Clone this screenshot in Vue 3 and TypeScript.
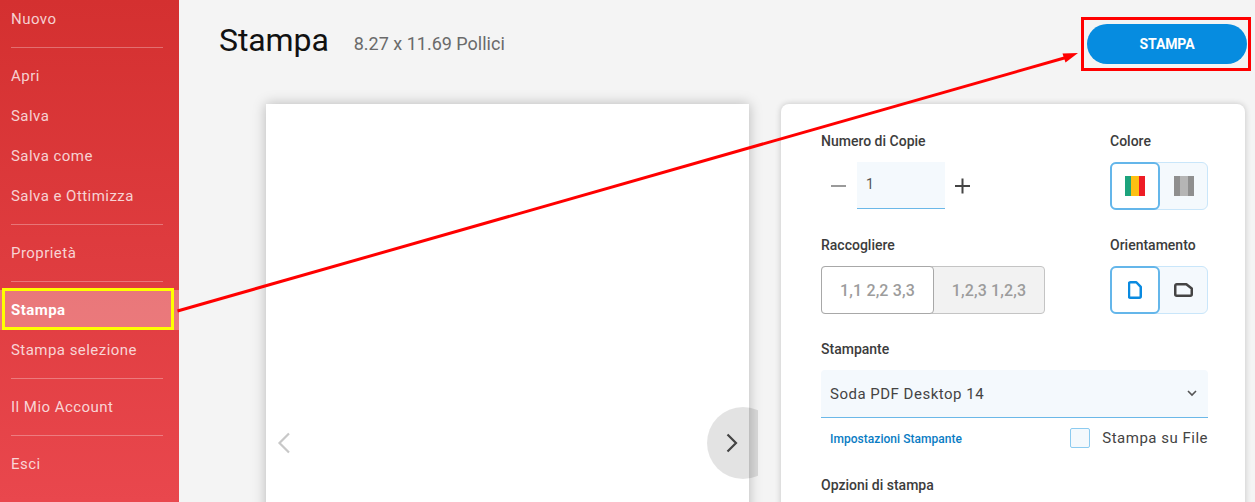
<script setup lang="ts">
const groups: { label: string; active?: boolean }[][] = [
  [{ label: 'Nuovo' }],
  [{ label: 'Apri' }, { label: 'Salva' }, { label: 'Salva come' }, { label: 'Salva e Ottimizza' }],
  [{ label: 'Proprietà' }],
  [{ label: 'Stampa', active: true }, { label: 'Stampa selezione' }],
  [{ label: 'Il Mio Account' }],
  [{ label: 'Esci' }],
]
</script>

<template>
  <div class="app">
    <aside class="sidebar">
      <div v-for="(g, i) in groups" :key="i" class="group">
        <div v-for="it in g" :key="it.label" class="item" :class="{ active: it.active }">{{ it.label }}</div>
      </div>
    </aside>
    <main class="main">
      <header class="header">
        <h1 class="title">Stampa</h1>
        <span class="size">8.27 x 11.69 Pollici</span>
        <button class="print">STAMPA</button>
      </header>
      <section class="content">
        <div class="page"></div>
        <div class="panel">
          <div class="row first">
            <div>
              <div class="label">Numero di Copie</div>
              <div class="stepper">
                <svg class="step" width="16" height="16" viewBox="0 0 16 16"><path d="M0 8h15" stroke="#9a9a9a" stroke-width="2" /></svg>
                <div class="num">1</div>
                <svg class="step" width="16" height="16" viewBox="0 0 16 16"><path d="M0 8h15M7.500 .5v15" stroke="#444" stroke-width="2" /></svg>
              </div>
            </div>
            <div class="side">
              <div class="label">Colore</div>
              <div class="toggle">
                <div class="tbtn on">
                  <svg width="20" height="20" viewBox="0 0 20 20"><rect width="6" height="20" fill="#1ca37c" /><rect x="6" width="8" height="20" fill="#fdc012" /><rect x="14" width="6" height="20" fill="#ee1c25" /></svg>
                </div>
                <div class="tbtn">
                  <svg width="20" height="20" viewBox="0 0 20 20"><rect width="6" height="20" fill="#8f8f8f" /><rect x="6" width="8" height="20" fill="#b5b5b5" /><rect x="14" width="6" height="20" fill="#8f8f8f" /></svg>
                </div>
              </div>
            </div>
          </div>
          <div class="row second">
            <div>
              <div class="label">Raccogliere</div>
              <div class="collate">
                <div class="col on">1,1 2,2 3,3</div>
                <div class="col">1,2,3 1,2,3</div>
              </div>
            </div>
            <div class="side">
              <div class="label">Orientamento</div>
              <div class="toggle">
                <div class="tbtn on">
                  <svg width="14" height="18" viewBox="0 0 14 18"><path d="M2.500 1.250h5.800l4.450 4.700v9.300a1.500 1.500 0 0 1-1.500 1.500h-8.750a1.500 1.500 0 0 1-1.500-1.500v-12.500a1.500 1.500 0 0 1 1.500-1.500z" fill="none" stroke="#0a8ae0" stroke-width="2.500" stroke-linejoin="round" /></svg>
                </div>
                <div class="tbtn">
                  <svg width="19" height="14" viewBox="0 0 19 14"><path d="M2.750 1.250h9.550l5.450 4.300v5.700a1.500 1.500 0 0 1-1.500 1.500h-13.500a1.500 1.500 0 0 1-1.500-1.500v-8.500a1.500 1.500 0 0 1 1.500-1.500z" fill="none" stroke="#444" stroke-width="2.500" stroke-linejoin="round" /></svg>
                </div>
              </div>
            </div>
          </div>
          <div class="label printer-label">Stampante</div>
          <div class="select">
            <span>Soda PDF Desktop 14</span>
            <svg width="10" height="7" viewBox="0 0 10 7"><path d="M1 1l4 4 4-4" fill="none" stroke="#555" stroke-width="1.600" /></svg>
          </div>
          <div class="under">
            <span class="link">Impostazioni Stampante</span>
            <label class="file"><span class="box"></span>Stampa su File</label>
          </div>
          <div class="label options">Opzioni di stampa</div>
        </div>
        <svg class="prev" width="14" height="22" viewBox="0 0 14 22"><path d="M12 1.500L2.500 11l9.500 9.500" fill="none" stroke="#c8c8c8" stroke-width="2.200" /></svg>
        <div class="next-clip">
          <div class="next">
            <svg width="12" height="20" viewBox="0 0 12 20"><path d="M1.500 1.500L10 10l-8.500 8.500" fill="none" stroke="#444" stroke-width="2.200" /></svg>
          </div>
        </div>
      </section>
    </main>
    <div class="hl-yellow"></div>
    <div class="hl-red"></div>
    <svg class="arrow" width="1255" height="502" viewBox="0 0 1255 502">
      <path d="M177.500 311L1066 57.500" stroke="#ff0000" stroke-width="3" fill="none" />
      <path d="M1078 53L1062.500 53.500L1065.500 62.500z" fill="#ff0000" />
    </svg>
  </div>
</template>

<style>
html, body { margin: 0; overflow: hidden; }
</style>

<style scoped>
.app {
  position: relative;
  display: flex;
  width: 1255px;
  height: 502px;
  overflow: hidden;
  font-family: Roboto, "Liberation Sans", sans-serif;
  background: #f4f4f4;
}
.sidebar {
  flex: 0 0 179px;
  box-sizing: border-box;
  height: 502px;
  background: linear-gradient(180deg, #d43030 0%, #e9474d 100%);
}
.group {
  margin: 0 16px 8px 11px;
  padding: 0 0 8px;
  border-bottom: 1px solid rgba(255, 255, 255, 0.3);
}
.group:first-child { margin-top: -1px; }
.group:last-child { border-bottom: 0; }
.item {
  height: 40px;
  line-height: 40px;
  font-size: 15px;
  letter-spacing: 0.46px;
  color: rgba(255, 255, 255, 0.78);
  white-space: nowrap;
}
.item.active {
  margin: 0 -16px 0 -11px;
  padding-left: 11px;
  font-weight: 700;
  color: #fff;
  background: rgba(255, 255, 255, 0.3);
}
.main {
  flex: 1;
  min-width: 0;
  display: flex;
  flex-direction: column;
}
.header {
  display: flex;
  align-items: flex-start;
  height: 104px;
  box-sizing: border-box;
  padding: 20px 8px 0 40px;
}
.title {
  margin: 0;
  font-size: 32px;
  line-height: 40px;
  font-weight: 400;
  letter-spacing: -0.1px;
  color: #111;
}
.size {
  margin: 14px 0 0 25px;
  font-size: 18px;
  line-height: 20px;
  color: #6a6a6a;
}
.print {
  margin-left: auto;
  margin-top: 4px;
  width: 160px;
  height: 40px;
  border: 0;
  border-radius: 20px;
  background: #068ce0;
  color: #fff;
  font-family: inherit;
  font-size: 14px;
  font-weight: 700;
  letter-spacing: -0.1px;
}
.content {
  position: relative;
  flex: 1;
  display: flex;
  padding-left: 87px;
  min-height: 0;
}
.page {
  width: 483px;
  height: 500px;
  background: #fff;
  box-shadow: 0 0 12px rgba(0, 0, 0, 0.25);
}
.panel {
  margin-left: 32px;
  width: 464px;
  height: 500px;
  box-sizing: border-box;
  padding: 28px 37px 0 40px;
  background: #fff;
  border-radius: 8px 8px 0 0;
  box-shadow: 0 0 6px rgba(0, 0, 0, 0.2);
}
.row {
  display: flex;
  justify-content: space-between;
}
.second { margin-top: 26px; }
.side { width: 98px; }
.label {
  font-size: 14px;
  line-height: 18px;
  font-weight: 500;
  color: #3c3c3c;
  letter-spacing: 0;
}
.stepper {
  display: flex;
  align-items: center;
  margin-top: 12px;
  height: 48px;
}
.step { margin: 0 10px; flex: none; }
.num {
  box-sizing: border-box;
  width: 88px;
  height: 47px;
  margin: 0 0 1px 0;
  padding: 14px 0 0 9px;
  background: #f4f9fd;
  border-bottom: 1px solid #6bb8e8;
  font-size: 14px;
  color: #555;
}
.toggle {
  display: flex;
  margin-top: 12px;
  height: 48px;
  box-sizing: border-box;
  border: 1px solid #c9e6fa;
  border-radius: 6px;
  background: #f4f9fd;
}
.tbtn {
  flex: 1;
  display: flex;
  align-items: center;
  justify-content: center;
}
.tbtn.on {
  flex: 0 0 50px;
  box-sizing: border-box;
  margin: -1px 0 -1px -1px;
  border: 2px solid #64b6ea;
  border-radius: 6px;
  background: #fff;
}
.collate {
  display: flex;
  margin-top: 12px;
  width: 224px;
  height: 48px;
  box-sizing: border-box;
  border: 1px solid #c4c4c4;
  border-radius: 4px;
  background: #f2f2f2;
}
.col {
  flex: 1;
  display: flex;
  align-items: center;
  justify-content: center;
  font-size: 16px;
  font-weight: 500;
  letter-spacing: 0.15px;
  color: #9c9c9c;
}
.col.on {
  flex: 0 0 113px;
  box-sizing: border-box;
  margin: -1px 0 -1px -1px;
  border: 1px solid #a8a8a8;
  border-radius: 4px;
  background: #fff;
}
.printer-label { margin-top: 26px; }
.select {
  display: flex;
  align-items: center;
  justify-content: space-between;
  box-sizing: border-box;
  margin-top: 12px;
  height: 48px;
  padding: 0 11px 0 9px;
  background: #f4f9fd;
  border-bottom: 1px solid #6bb8e8;
  border-radius: 4px 4px 0 0;
  font-size: 15px;
  letter-spacing: 0.5px;
  color: #444;
}
.under {
  display: flex;
  align-items: center;
  justify-content: space-between;
  margin-top: 10px;
  padding-left: 9px;
  height: 20px;
}
.link {
  margin-top: 2px;
  font-size: 12px;
  font-weight: 500;
  color: #0a7cc4;
  letter-spacing: 0.04px;
}
.file {
  display: flex;
  align-items: center;
  font-size: 15px;
  letter-spacing: 0.5px;
  color: #444;
}
.box {
  box-sizing: border-box;
  width: 20px;
  height: 20px;
  margin-right: 12px;
  border: 1px solid #8ccbf0;
  border-radius: 2px;
  background: #f4f9fd;
}
.options { margin-top: 28px; }
.prev {
  position: absolute;
  left: 98px;
  top: 328px;
}
.next-clip {
  position: absolute;
  left: 528px;
  top: 303px;
  width: 51px;
  height: 72px;
  overflow: hidden;
}
.next {
  display: flex;
  align-items: center;
  justify-content: center;
  width: 72px;
  height: 72px;
  border-radius: 50%;
  background: rgba(0, 0, 0, 0.11);
}
.next svg { margin-right: 22px; }
.hl-yellow {
  position: absolute;
  left: 2px;
  top: 288px;
  width: 172px;
  height: 42px;
  box-sizing: border-box;
  border: 3px solid #ffff00;
}
.hl-red {
  position: absolute;
  left: 1081px;
  top: 17px;
  width: 170px;
  height: 54px;
  box-sizing: border-box;
  border: 3px solid #ff0000;
}
.arrow {
  position: absolute;
  left: 0;
  top: 0;
  pointer-events: none;
}
</style>
